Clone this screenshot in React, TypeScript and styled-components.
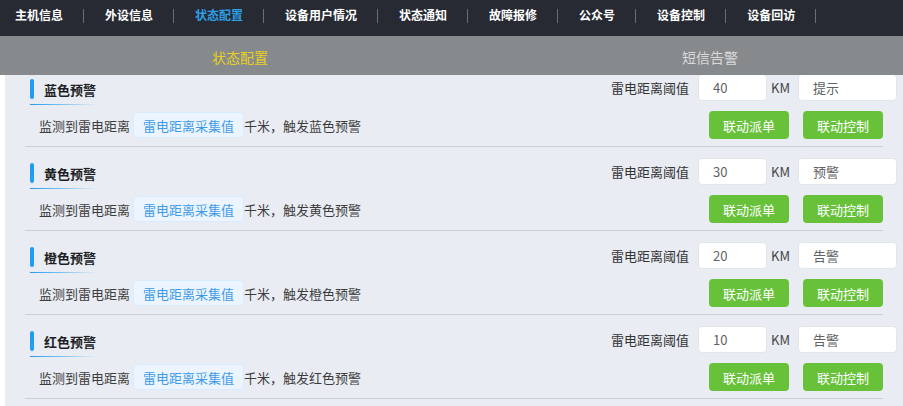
import React from "react";
import styled, { createGlobalStyle } from "styled-components";

const Global = createGlobalStyle`
  html, body { margin: 0; padding: 0; background: #ffffff; overflow: hidden; }
  body { font-family: "Noto Sans CJK SC", "Noto Sans", sans-serif; }
  * { box-sizing: border-box; }
`;

const Page = styled.div`
  width: 903px;
  height: 406px;
  display: flex;
  flex-direction: column;
  overflow: hidden;
`;

const Nav = styled.nav`
  height: 36px;
  flex: none;
  background: #272a33;
  display: flex;
  align-items: flex-start;
  padding-left: 15px;
`;

const NavList = styled.div`
  height: 30px;
  display: flex;
  align-items: center;
`;

const NavItem = styled.span<{ $active?: boolean; $first?: boolean }>`
  font-size: 12px;
  font-weight: 700;
  line-height: 30px;
  color: ${(p) => (p.$active ? "#2e9fe4" : "#ffffff")};
  padding: 0 20px 0 ${(p) => (p.$first ? "0" : "21px")};
  white-space: nowrap;
`;

const NavSep = styled.span`
  width: 1px;
  height: 14px;
  margin-top: 2px;
  background: #6b6e75;
  flex: none;
`;

const TabBar = styled.div`
  height: 39px;
  flex: none;
  background: #868a8d;
  display: flex;
  padding-left: 5px;
  overflow: hidden;
`;

const Tab = styled.div<{ $active?: boolean }>`
  width: 470px;
  flex: none;
  display: flex;
  align-items: center;
  justify-content: center;
  font-size: 14px;
  padding-top: 2px;
  color: ${(p) => (p.$active ? "#e9cf1d" : "#dadada")};
`;

const Content = styled.div`
  flex: 1;
  margin-left: 5px;
  background: #e9ecf3;
  overflow: hidden;
`;

const List = styled.div`
  margin: -12px 20px 0 20px;
`;

const Section = styled.section`
  padding: 11px 0 7px;
  border-bottom: 1px solid #cdcfd4;
`;

const HeaderRow = styled.div`
  height: 27px;
  display: flex;
  justify-content: space-between;
  align-items: flex-start;
`;

const TitleBlock = styled.div`
  margin: 5px 0 0 5px;
  display: flex;
  flex-direction: column;
`;

const TitleLine = styled.div`
  display: flex;
  align-items: center;
  height: 20px;
`;

const TitleMark = styled.span`
  width: 4px;
  height: 20px;
  border-radius: 2px;
  background: #1e9df2;
`;

const TitleText = styled.span`
  margin-left: 10px;
  font-size: 13px;
  font-weight: 700;
  color: #1d1f24;
`;

const Underline = styled.div`
  margin-top: 5px;
  width: 67px;
  height: 1px;
  background: linear-gradient(90deg, #1e9df2 0%, rgba(30, 157, 242, 0) 100%);
`;

const Threshold = styled.div`
  display: flex;
  align-items: center;
  margin-right: -14px;
`;

const Label = styled.span`
  font-size: 13px;
  color: #333333;
  margin-right: 9px;
`;

const Field = styled.input<{ $w: number }>`
  width: ${(p) => p.$w}px;
  height: 27px;
  border: 1px solid #e2e5ea;
  border-radius: 4px;
  background: #ffffff;
  padding: 0 14px;
  font-family: "Noto Sans CJK SC", "Noto Sans", sans-serif;
  font-size: 13px;
  color: #606266;
  outline: none;
`;

const Unit = styled.span`
  width: 31px;
  flex: none;
  padding-left: 4px;
  font-size: 13px;
  color: #444444;
`;

const DescRow = styled.div`
  margin-top: 10px;
  height: 28px;
  display: flex;
  align-items: center;
  justify-content: space-between;
`;

const Desc = styled.div`
  display: flex;
  align-items: center;
  padding-left: 14px;
  font-size: 13px;
  color: #3c3c3c;
`;

const Tag = styled.span`
  height: 26px;
  display: inline-flex;
  align-items: center;
  margin-left: 3px;
  padding: 0 9px;
  background: #ecf5ff;
  border: 1px solid #d9ecff;
  border-radius: 4px;
  color: #3f9be6;
`;

const Buttons = styled.div`
  display: flex;
  gap: 14px;
`;

const Button = styled.button`
  width: 80px;
  height: 28px;
  border: none;
  border-radius: 4px;
  background: #67c23a;
  color: #ffffff;
  font-family: "Noto Sans CJK SC", "Noto Sans", sans-serif;
  font-size: 13px;
  padding: 0;
  cursor: pointer;
`;

const navItems = ["主机信息", "外设信息", "状态配置", "设备用户情况", "状态通知", "故障报修", "公众号", "设备控制", "设备回访"];

const levels = [
  { name: "蓝色", km: "40", level: "提示" },
  { name: "黄色", km: "30", level: "预警" },
  { name: "橙色", km: "20", level: "告警" },
  { name: "红色", km: "10", level: "告警" },
];

export default function App() {
  return (
    <Page>
      <Global />
      <Nav>
        <NavList>
          {navItems.map((n, i) => (
            <React.Fragment key={n}>
              <NavItem $first={i === 0} $active={n === "状态配置"}>{n}</NavItem>
              <NavSep />
            </React.Fragment>
          ))}
        </NavList>
      </Nav>
      <TabBar>
        <Tab $active>状态配置</Tab>
        <Tab>短信告警</Tab>
      </TabBar>
      <Content>
        <List>
          {levels.map((l) => (
            <Section key={l.name}>
              <HeaderRow>
                <TitleBlock>
                  <TitleLine>
                    <TitleMark />
                    <TitleText>{l.name}预警</TitleText>
                  </TitleLine>
                  <Underline />
                </TitleBlock>
                <Threshold>
                  <Label>雷电距离阈值</Label>
                  <Field $w={69} readOnly value={l.km} />
                  <Unit>KM</Unit>
                  <Field $w={99} readOnly value={l.level} />
                </Threshold>
              </HeaderRow>
              <DescRow>
                <Desc>
                  监测到雷电距离
                  <Tag>雷电距离采集值</Tag>
                  千米，触发{l.name}预警
                </Desc>
                <Buttons>
                  <Button>联动派单</Button>
                  <Button>联动控制</Button>
                </Buttons>
              </DescRow>
            </Section>
          ))}
        </List>
      </Content>
    </Page>
  );
}
